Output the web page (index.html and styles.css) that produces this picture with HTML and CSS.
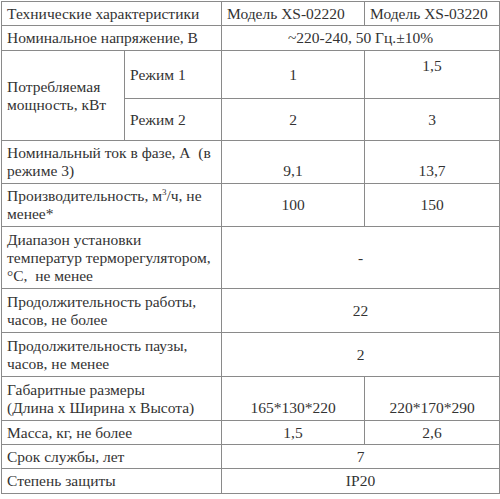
FILE: index.html
```html
<!DOCTYPE html>
<html lang="ru">
<head>
<meta charset="utf-8">
<link rel="stylesheet" href="styles.css">
</head>
<body>
<table class="spec">
  <colgroup>
    <col class="c1"><col class="c2"><col class="c3"><col class="c4">
  </colgroup>
  <tr class="r24">
    <td colspan="2">Технические характеристики</td>
    <td>Модель XS-02220</td>
    <td>Модель XS-03220</td>
  </tr>
  <tr class="r25">
    <td colspan="2">Номинальное напряжение, В</td>
    <td colspan="2" class="ctr">~220-240, 50 Гц.±10%</td>
  </tr>
  <tr class="r48">
    <td rowspan="2" class="mid">Потребляемая<br>мощность, кВт</td>
    <td>Режим 1</td>
    <td class="ctr">1</td>
    <td class="ctr top">1,5</td>
  </tr>
  <tr class="r42">
    <td>Режим 2</td>
    <td class="ctr">2</td>
    <td class="ctr">3</td>
  </tr>
  <tr class="r43">
    <td colspan="2">Номинальный ток в фазе, А&nbsp; (в<br>режиме 3)</td>
    <td class="ctr bot">9,1</td>
    <td class="ctr bot">13,7</td>
  </tr>
  <tr class="r43">
    <td colspan="2">Производительность, м<sup>3</sup>/ч, не<br>менее*</td>
    <td class="ctr">100</td>
    <td class="ctr">150</td>
  </tr>
  <tr class="r62">
    <td colspan="2">Диапазон установки<br>температур терморегулятором,<br>°С,&nbsp; не менее</td>
    <td colspan="2" class="ctr">-</td>
  </tr>
  <tr class="r44">
    <td colspan="2">Продолжительность работы,<br>часов, не более</td>
    <td colspan="2" class="ctr">22</td>
  </tr>
  <tr class="r44">
    <td colspan="2">Продолжительность паузы,<br>часов, не менее</td>
    <td colspan="2" class="ctr">2</td>
  </tr>
  <tr class="r44">
    <td colspan="2">Габаритные размеры<br>(Длина х Ширина х Высота)</td>
    <td class="ctr bot">165*130*220</td>
    <td class="ctr bot">220*170*290</td>
  </tr>
  <tr class="r24">
    <td colspan="2">Масса, кг, не более</td>
    <td class="ctr">1,5</td>
    <td class="ctr">2,6</td>
  </tr>
  <tr class="r24">
    <td colspan="2">Срок службы, лет</td>
    <td colspan="2" class="ctr">7</td>
  </tr>
  <tr class="r25">
    <td colspan="2">Степень защиты</td>
    <td colspan="2" class="ctr">IP20</td>
  </tr>
</table>
</body>
</html>
```
FILE: styles.css
```css
html, body {
  margin: 0;
  padding: 0;
  background: #ffffff;
}
body {
  padding: 1px 0 0 1px;
}
.spec {
  border-collapse: collapse;
  table-layout: fixed;
  width: 498px;
  font-family: "Liberation Serif", "Times New Roman", serif;
  font-size: 15.5px;
  line-height: 18px;
  color: #333333;
}
.c1 { width: 123px; }
.c2 { width: 97px; }
.c3 { width: 143px; }
.c4 { width: 135px; }
.spec td {
  border: 1.5px solid #8a8a8a;
  padding: 0 0 0 5px;
  vertical-align: middle;
  text-align: left;
  overflow: hidden;
  white-space: nowrap;
}
.spec td.ctr { text-align: center; padding: 0; }
.spec td.top { vertical-align: top; padding-top: 6px; }
.spec td.bot { vertical-align: bottom; padding-bottom: 3px; }
.spec sup {
  font-size: 9px;
  line-height: 0;
  vertical-align: 6px;
}
.r24 { height: 24px; }
.r25 { height: 25px; }
.r42 { height: 42px; }
.r43 { height: 43px; }
.r44 { height: 44px; }
.r48 { height: 48px; }
.r62 { height: 62px; }
```
